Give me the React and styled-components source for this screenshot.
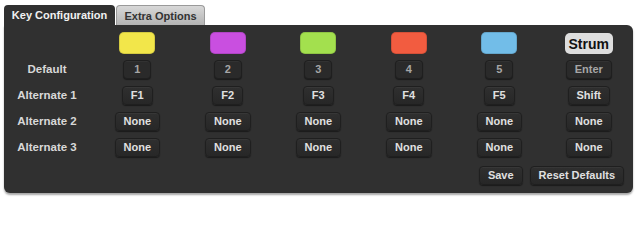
import React from 'react';
import styled, { createGlobalStyle } from 'styled-components';

const GlobalStyle = createGlobalStyle`
  body {
    margin: 0;
    background: #fff;
    font-family: "Liberation Sans", Arial, sans-serif;
  }
`;

const Wrapper = styled.div`
  padding: 5px 7px 8px 4px;
  width: 629px;
`;

const TabBar = styled.div`
  display: flex;
  height: 20px;
`;

const Tab = styled.div`
  box-sizing: border-box;
  width: ${props => props.width}px;
  height: 20px;
  display: flex;
  align-items: center;
  justify-content: center;
  font-size: 11px;
  font-weight: 700;
  border-radius: 4px 4px 0 0;
  color: ${props => props.active ? '#f0f0f0' : '#333'};
  background: ${props => props.active ? '#303030' : 'linear-gradient(#d8d8d8, #b4b4b4)'};
  border: ${props => props.active ? 'none' : '1px solid #9a9a9a'};
  border-bottom: none;
  margin-left: ${props => props.active ? '0' : '1px'};
`;

const Panel = styled.div`
  box-sizing: border-box;
  height: 168px;
  background: #303030;
  border-radius: 0 6px 6px 6px;
  box-shadow: 0 2px 2px rgba(0, 0, 0, 0.35);
  padding: 7px 0 8px 0;
  display: flex;
  flex-direction: column;
`;

const Grid = styled.div`
  display: grid;
  grid-template-columns: 88px repeat(5, 90.5px) 1fr;
  grid-template-rows: 24px repeat(4, 26px);
  align-items: center;
  justify-items: center;
`;

const Swatch = styled.div`
  align-self: start;
  width: 36px;
  height: 22px;
  border-radius: 5px;
  background: ${props => props.color};
  box-shadow: inset 0 0 0 1px rgba(0, 0, 0, 0.12);
`;

const Strum = styled.div`
  align-self: start;
  box-sizing: border-box;
  height: 21px;
  margin-top: 1px;
  padding: 0 4px;
  display: flex;
  align-items: center;
  border-radius: 5px;
  background: #dedede;
  color: #111;
  font-size: 14px;
  font-weight: 700;
`;

const RowLabel = styled.div`
  padding-right: 2px;
  color: #d8d8d8;
  font-size: 11.5px;
  font-weight: 700;
  white-space: nowrap;
`;

const KeyButton = styled.button`
  box-sizing: border-box;
  min-width: 28px;
  height: 19px;
  padding: 0 8px;
  border: 1px solid #1f1f1f;
  border-radius: 4px;
  background: ${props => props.dim ? '#2a2a2a' : 'linear-gradient(#2f2f2f, #272727)'};
  box-shadow: 0 1px 1px rgba(0, 0, 0, 0.45), inset 0 1px 0 rgba(255, 255, 255, 0.04);
  color: ${props => props.dim ? '#a6a6a6' : '#e0e0e0'};
  font-family: "Liberation Sans", Arial, sans-serif;
  font-size: 11px;
  font-weight: 700;
  line-height: 17px;
  white-space: nowrap;
  cursor: pointer;
`;

const Footer = styled.div`
  margin-top: auto;
  display: flex;
  justify-content: flex-end;
  gap: 7px;
  padding-right: 9px;
`;

const swatches = ['#f2e64a', '#c94fe0', '#a3e04e', '#f25c40', '#72bde8'];

const rows = [
  { label: 'Default', keys: ['1', '2', '3', '4', '5', 'Enter'], dim: true },
  { label: 'Alternate 1', keys: ['F1', 'F2', 'F3', 'F4', 'F5', 'Shift'] },
  { label: 'Alternate 2', keys: ['None', 'None', 'None', 'None', 'None', 'None'] },
  { label: 'Alternate 3', keys: ['None', 'None', 'None', 'None', 'None', 'None'] },
];

export default function App() {
  return (
    <>
      <GlobalStyle />
      <Wrapper>
        <TabBar>
          <Tab active width={111}>Key Configuration</Tab>
          <Tab width={89}>Extra Options</Tab>
        </TabBar>
        <Panel>
          <Grid>
            <div />
            {swatches.map(c => <Swatch key={c} color={c} />)}
            <Strum>Strum</Strum>
            {rows.map(row => (
              <React.Fragment key={row.label}>
                <RowLabel>{row.label}</RowLabel>
                {row.keys.map((k, i) => (
                  <KeyButton key={i} dim={row.dim}>{k}</KeyButton>
                ))}
              </React.Fragment>
            ))}
          </Grid>
          <Footer>
            <KeyButton>Save</KeyButton>
            <KeyButton>Reset Defaults</KeyButton>
          </Footer>
        </Panel>
      </Wrapper>
    </>
  );
}
